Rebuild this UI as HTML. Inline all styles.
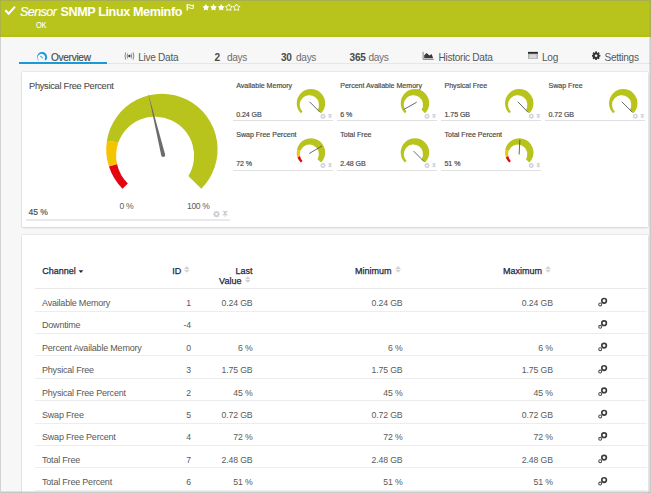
<!DOCTYPE html>
<html><head><meta charset="utf-8"><style>
*{margin:0;padding:0;box-sizing:border-box}
html,body{width:651px;height:493px;overflow:hidden;background:#f7f7f7;font-family:"Liberation Sans",sans-serif}
.a{position:absolute;white-space:nowrap}
#hdr{position:absolute;left:0;top:0;width:651px;height:37px;background:#b8c41c}
#tabline{position:absolute;left:19px;top:63px;width:632px;height:1px;background:#e6e6e6}
.tab{position:absolute;top:52.1px;font-size:10.1px;letter-spacing:-0.3px;color:#585858;white-space:nowrap;line-height:12px}
.tab b{color:#4a4a4a;font-weight:bold}
.dy{color:#6e6e6e}
#ul{position:absolute;left:19px;top:62px;width:88px;height:2px;background:#1a9ad8}
.panel{position:absolute;left:22px;width:626px;background:#fff;box-shadow:0 0 1.5px rgba(0,0,0,.18),0 1px 2px rgba(0,0,0,.1)}
.ct{position:absolute;font-size:7.05px;letter-spacing:0px;color:#4a4a4a;white-space:nowrap;line-height:9px;-webkit-text-stroke:0.18px #4a4a4a}
.cv{position:absolute;font-size:7.05px;letter-spacing:-0.05px;word-spacing:0px;color:#4a4a4a;white-space:nowrap;line-height:9px;-webkit-text-stroke:0.18px #4a4a4a}
.cl{position:absolute;width:100px;height:1px;background:#e0e0e0}
.th{position:absolute;font-size:9px;color:#1d2741;white-space:nowrap;line-height:10px;-webkit-text-stroke:0.25px #1d2741}
.tn{position:absolute;font-size:9px;letter-spacing:-0.2px;color:#585858;white-space:nowrap;line-height:11px}
.tr{position:absolute;font-size:8.7px;letter-spacing:-0.12px;color:#5a5a5a;white-space:nowrap;line-height:11px;text-align:right}
.rl{position:absolute;left:35px;width:612px;height:1px;background:#ededed}
#frame{position:absolute;left:0;top:0;width:651px;height:493px;border-left:1px solid rgba(150,150,150,.38);border-top:1px solid rgba(150,150,150,.45);border-right:1px solid rgba(150,150,150,.45);border-bottom:1px solid rgba(150,150,150,.5);pointer-events:none;box-shadow:inset -1px -1px 0 rgba(150,150,150,.25)}
</style></head><body>
<div id="hdr"></div><div class="a" style="left:0;top:35px;width:651px;height:1.6px;background:#b3c012"></div>
<div class="a" style="left:20px;top:5px;font-size:12.5px;font-style:italic;color:#fff;line-height:14px;letter-spacing:-0.55px;-webkit-text-stroke:0.2px #fff">Sensor</div>
<div class="a" style="left:60.4px;top:4.9px;font-size:12.6px;letter-spacing:-0.38px;font-weight:bold;color:#fff;line-height:14px">SNMP Linux Meminfo</div>
<div class="a" style="left:36.2px;top:21.2px;font-size:8.6px;letter-spacing:-0.1px;color:#fff;line-height:9px;-webkit-text-stroke:0.12px #fff;transform:scaleX(0.85);transform-origin:0 0">OK</div>

<div id="tabline"></div>
<div id="ul"></div>
<div class="tab" style="left:51px;color:#4a4a4a;font-size:10.1px;letter-spacing:-0.3px;-webkit-text-stroke:0.15px #4a4a4a">Overview</div>
<div class="tab" style="left:138.3px">Live Data</div>
<div class="tab" style="left:214.5px"><b>2</b></div><div class="tab dy" style="left:226.9px">days</div>
<div class="tab" style="left:281px"><b>30</b></div><div class="tab dy" style="left:296px">days</div>
<div class="tab" style="left:349.6px"><b>365</b></div><div class="tab dy" style="left:368.4px">days</div>
<div class="tab" style="left:438.6px">Historic Data</div>
<div class="tab" style="left:542px">Log</div>
<div class="tab" style="left:604.6px">Settings</div>

<div class="panel" style="top:72px;height:155px"></div>
<div class="a" style="left:29px;top:81px;font-size:9.2px;letter-spacing:-0.25px;color:#4d4d4d;line-height:11px;-webkit-text-stroke:0.1px #4d4d4d">Physical Free Percent</div>
<div class="a" style="left:28.4px;top:207.2px;font-size:8.6px;color:#4d4d4d;line-height:11px;-webkit-text-stroke:0.15px #4d4d4d">45 %</div>
<div class="a" style="left:119.6px;top:200.6px;font-size:8.6px;letter-spacing:-0.35px;color:#5c5c5c;line-height:11px">0 %</div>
<div class="a" style="left:187px;top:200.6px;font-size:8.6px;letter-spacing:-0.35px;color:#5c5c5c;line-height:11px">100 %</div>
<div class="a" style="left:25.5px;top:219px;width:204px;height:2px;background:#e9e9e9"></div>
<div class="ct" style="left:236.2px;top:80.6px">Available Memory</div><div class="cv" style="left:236.2px;top:109.6px">0.24 GB</div><div class="cl" style="left:233.0px;top:120.2px"></div><div class="ct" style="left:340.2px;top:80.6px">Percent Available Memory</div><div class="cv" style="left:340.2px;top:109.6px">6 %</div><div class="cl" style="left:337.0px;top:120.2px"></div><div class="ct" style="left:444.5px;top:80.6px">Physical Free</div><div class="cv" style="left:444.5px;top:109.6px">1.75 GB</div><div class="cl" style="left:441.3px;top:120.2px"></div><div class="ct" style="left:548.5px;top:80.6px">Swap Free</div><div class="cv" style="left:548.5px;top:109.6px">0.72 GB</div><div class="cl" style="left:545.3px;top:120.2px"></div><div class="ct" style="left:236.2px;top:129.9px">Swap Free Percent</div><div class="cv" style="left:236.2px;top:158.9px">72 %</div><div class="cl" style="left:233.0px;top:169.5px"></div><div class="ct" style="left:340.2px;top:129.9px">Total Free</div><div class="cv" style="left:340.2px;top:158.9px">2.48 GB</div><div class="cl" style="left:337.0px;top:169.5px"></div><div class="ct" style="left:444.5px;top:129.9px">Total Free Percent</div><div class="cv" style="left:444.5px;top:158.9px">51 %</div><div class="cl" style="left:441.3px;top:169.5px"></div>

<div class="panel" style="top:235px;height:260px"></div>
<div class="th" style="left:42.3px;top:266px">Channel</div>
<div class="th" style="left:172.3px;top:266px">ID</div>
<div class="th" style="right:398.6px;top:266px;text-align:right">Last</div>
<div class="th" style="right:409.6px;top:276.2px;text-align:right">Value</div>
<div class="th" style="left:354.9px;top:266px">Minimum</div>
<div class="th" style="left:502.9px;top:266px">Maximum</div>
<div class="rl" style="top:288px;height:1px;background:#e9e9e9"></div>
<div class="tn" style="left:42px;top:298.0px">Available Memory</div><div class="tr" style="right:460.1px;top:298.0px">1</div><div class="tr" style="right:398.5px;top:298.0px">0.24 GB</div><div class="tr" style="right:248.5px;top:298.0px">0.24 GB</div><div class="tr" style="right:98.2px;top:298.0px">0.24 GB</div><div class="rl" style="top:310.6px"></div><div class="tn" style="left:42px;top:320.4px">Downtime</div><div class="tr" style="right:460.1px;top:320.4px">-4</div><div class="rl" style="top:333.0px"></div><div class="tn" style="left:42px;top:342.8px">Percent Available Memory</div><div class="tr" style="right:460.1px;top:342.8px">0</div><div class="tr" style="right:398.5px;top:342.8px">6 %</div><div class="tr" style="right:248.5px;top:342.8px">6 %</div><div class="tr" style="right:98.2px;top:342.8px">6 %</div><div class="rl" style="top:355.4px"></div><div class="tn" style="left:42px;top:365.2px">Physical Free</div><div class="tr" style="right:460.1px;top:365.2px">3</div><div class="tr" style="right:398.5px;top:365.2px">1.75 GB</div><div class="tr" style="right:248.5px;top:365.2px">1.75 GB</div><div class="tr" style="right:98.2px;top:365.2px">1.75 GB</div><div class="rl" style="top:377.8px"></div><div class="tn" style="left:42px;top:387.6px">Physical Free Percent</div><div class="tr" style="right:460.1px;top:387.6px">2</div><div class="tr" style="right:398.5px;top:387.6px">45 %</div><div class="tr" style="right:248.5px;top:387.6px">45 %</div><div class="tr" style="right:98.2px;top:387.6px">45 %</div><div class="rl" style="top:400.2px"></div><div class="tn" style="left:42px;top:410.0px">Swap Free</div><div class="tr" style="right:460.1px;top:410.0px">5</div><div class="tr" style="right:398.5px;top:410.0px">0.72 GB</div><div class="tr" style="right:248.5px;top:410.0px">0.72 GB</div><div class="tr" style="right:98.2px;top:410.0px">0.72 GB</div><div class="rl" style="top:422.6px"></div><div class="tn" style="left:42px;top:432.4px">Swap Free Percent</div><div class="tr" style="right:460.1px;top:432.4px">4</div><div class="tr" style="right:398.5px;top:432.4px">72 %</div><div class="tr" style="right:248.5px;top:432.4px">72 %</div><div class="tr" style="right:98.2px;top:432.4px">72 %</div><div class="rl" style="top:445.0px"></div><div class="tn" style="left:42px;top:454.8px">Total Free</div><div class="tr" style="right:460.1px;top:454.8px">7</div><div class="tr" style="right:398.5px;top:454.8px">2.48 GB</div><div class="tr" style="right:248.5px;top:454.8px">2.48 GB</div><div class="tr" style="right:98.2px;top:454.8px">2.48 GB</div><div class="rl" style="top:467.4px"></div><div class="tn" style="left:42px;top:477.2px">Total Free Percent</div><div class="tr" style="right:460.1px;top:477.2px">6</div><div class="tr" style="right:398.5px;top:477.2px">51 %</div><div class="tr" style="right:248.5px;top:477.2px">51 %</div><div class="tr" style="right:98.2px;top:477.2px">51 %</div><div class="rl" style="top:489.8px"></div>

<svg class="a" style="left:0;top:0" width="651" height="493"><polygon points="205.90,4.10 204.75,6.02 202.57,6.52 204.05,8.20 203.84,10.43 205.90,9.55 207.96,10.43 207.75,8.20 209.23,6.52 207.05,6.02" fill="#fff"/><polygon points="213.55,4.10 212.40,6.02 210.22,6.52 211.70,8.20 211.49,10.43 213.55,9.55 215.61,10.43 215.40,8.20 216.88,6.52 214.70,6.02" fill="#fff"/><polygon points="221.20,4.10 220.05,6.02 217.87,6.52 219.35,8.20 219.14,10.43 221.20,9.55 223.26,10.43 223.05,8.20 224.53,6.52 222.35,6.02" fill="#fff"/><polygon points="228.85,4.10 227.70,6.02 225.52,6.52 227.00,8.20 226.79,10.43 228.85,9.55 230.91,10.43 230.70,8.20 232.18,6.52 230.00,6.02" fill="none" stroke="#fff" stroke-width="0.9" stroke-linejoin="round"/><polygon points="236.50,4.10 235.35,6.02 233.17,6.52 234.65,8.20 234.44,10.43 236.50,9.55 238.56,10.43 238.35,8.20 239.83,6.52 237.65,6.02" fill="none" stroke="#fff" stroke-width="0.9" stroke-linejoin="round"/><path d="M187.2 4.2V10.6" fill="none" stroke="#fff" stroke-width="1.3"/><path d="M187.4 5.1Q189.2 4.4 190.6 5.3Q192 6.1 193.3 5.2V8.1Q192 8.9 190.6 8.1Q189.2 7.4 187.4 8.1" fill="none" stroke="#fff" stroke-width="1.05"/><path d="M5.3 10.2L8.7 13.6L15.0 6.6" fill="none" stroke="#fff" stroke-width="2.1"/><path fill="#1a9ad8" d="M38.49 60.61 A5.10 5.10 0 1 1 45.71 60.61 L44.60 59.50 A3.70 3.70 0 1 0 38.80 60.30 Z"/><line x1="40.3" y1="56.0" x2="42.8" y2="58.1" stroke="#4aaee0" stroke-width="1.1"/><ellipse cx="129.4" cy="56" rx="1.1" ry="1.3" fill="#333"/><path d="M127.6 53.6Q126.6 56 127.6 58.4M131.2 53.6Q132.2 56 131.2 58.4" fill="none" stroke="#7a7a7a" stroke-width="0.9"/><path d="M125.7 52.4Q124.3 56 125.7 59.6M133.1 52.4Q134.5 56 133.1 59.6" fill="none" stroke="#7a7a7a" stroke-width="0.9"/><path d="M423.1 51.8V59.4H433.8" fill="none" stroke="#888" stroke-width="1"/><path d="M424.2 58.3V55.2L426.5 52.9L429.6 55.4L431.6 54L433.1 58.3Z" fill="#3a3a3a"/><rect x="528" y="51.9" width="9.9" height="7" fill="#b0b0b0"/><rect x="528" y="51.9" width="9.9" height="1.8" fill="#2a2a2a"/><rect x="529.4" y="54.3" width="7.1" height="3.8" fill="#d8d8d8"/><circle cx="596.1" cy="55.7" r="2.95" fill="#333"/><rect x="595.30" y="51.60" width="1.60" height="8.20" fill="#333" transform="rotate(0.0 596.1 55.7)"/><rect x="595.30" y="51.60" width="1.60" height="8.20" fill="#333" transform="rotate(45.0 596.1 55.7)"/><rect x="595.30" y="51.60" width="1.60" height="8.20" fill="#333" transform="rotate(90.0 596.1 55.7)"/><rect x="595.30" y="51.60" width="1.60" height="8.20" fill="#333" transform="rotate(135.0 596.1 55.7)"/><rect x="595.30" y="51.60" width="1.60" height="8.20" fill="#333" transform="rotate(180.0 596.1 55.7)"/><rect x="595.30" y="51.60" width="1.60" height="8.20" fill="#333" transform="rotate(225.0 596.1 55.7)"/><rect x="595.30" y="51.60" width="1.60" height="8.20" fill="#333" transform="rotate(270.0 596.1 55.7)"/><rect x="595.30" y="51.60" width="1.60" height="8.20" fill="#333" transform="rotate(315.0 596.1 55.7)"/><circle cx="596.1" cy="55.7" r="1.25" fill="#f7f7f7"/><path fill="#e3050f" d="M122.51 188.79 A55.70 55.70 0 0 1 108.93 166.61 L117.02 163.98 A39.00 39.00 0 0 0 127.84 183.46 Z"/><path fill="#f5c300" d="M108.93 166.61 A55.70 55.70 0 0 1 106.89 140.69 L118.36 142.50 A39.00 39.00 0 0 0 117.02 163.98 Z"/><path fill="#b8c41c" d="M106.89 140.69 A55.70 55.70 0 1 1 201.29 188.79 L188.40 175.90 A39.00 39.00 0 1 0 118.36 142.50 Z"/><path fill="#6c6c6c" d="M165.14 154.53 L148.00 92.60 L161.26 155.47 Z"/><circle cx="163.20" cy="155.00" r="2" fill="#6c6c6c"/><circle cx="216.5" cy="214.1" r="2.83" fill="#cdd0d6"/><rect x="216.00" y="210.95" width="1.00" height="6.30" fill="#cdd0d6" transform="rotate(0.0 216.5 214.1)"/><rect x="216.00" y="210.95" width="1.00" height="6.30" fill="#cdd0d6" transform="rotate(45.0 216.5 214.1)"/><rect x="216.00" y="210.95" width="1.00" height="6.30" fill="#cdd0d6" transform="rotate(90.0 216.5 214.1)"/><rect x="216.00" y="210.95" width="1.00" height="6.30" fill="#cdd0d6" transform="rotate(135.0 216.5 214.1)"/><rect x="216.00" y="210.95" width="1.00" height="6.30" fill="#cdd0d6" transform="rotate(180.0 216.5 214.1)"/><rect x="216.00" y="210.95" width="1.00" height="6.30" fill="#cdd0d6" transform="rotate(225.0 216.5 214.1)"/><rect x="216.00" y="210.95" width="1.00" height="6.30" fill="#cdd0d6" transform="rotate(270.0 216.5 214.1)"/><rect x="216.00" y="210.95" width="1.00" height="6.30" fill="#cdd0d6" transform="rotate(315.0 216.5 214.1)"/><circle cx="216.5" cy="214.1" r="1.10" fill="#fff"/><rect x="222.60" y="211.00" width="5.00" height="0.99" fill="#cdd0d6"/><rect x="223.85" y="211.00" width="2.50" height="3.41" fill="#cdd0d6"/><rect x="222.60" y="214.10" width="5.00" height="1.24" fill="#cdd0d6"/><rect x="224.70" y="214.72" width="0.80" height="2.48" fill="#cdd0d6"/><path fill="#b8c41c" d="M300.87 113.28 A14.25 14.25 0 1 1 321.03 113.28 L317.58 109.83 A9.60 9.60 0 1 0 302.56 111.59 Z"/><line x1="309.54" y1="101.79" x2="320.00" y2="112.25" stroke="#505050" stroke-width="0.85"/><circle cx="323.0" cy="116.3" r="2.25" fill="#cfd3da"/><rect x="322.60" y="113.85" width="0.80" height="4.90" fill="#cfd3da" transform="rotate(0.0 323.0 116.3)"/><rect x="322.60" y="113.85" width="0.80" height="4.90" fill="#cfd3da" transform="rotate(45.0 323.0 116.3)"/><rect x="322.60" y="113.85" width="0.80" height="4.90" fill="#cfd3da" transform="rotate(90.0 323.0 116.3)"/><rect x="322.60" y="113.85" width="0.80" height="4.90" fill="#cfd3da" transform="rotate(135.0 323.0 116.3)"/><rect x="322.60" y="113.85" width="0.80" height="4.90" fill="#cfd3da" transform="rotate(180.0 323.0 116.3)"/><rect x="322.60" y="113.85" width="0.80" height="4.90" fill="#cfd3da" transform="rotate(225.0 323.0 116.3)"/><rect x="322.60" y="113.85" width="0.80" height="4.90" fill="#cfd3da" transform="rotate(270.0 323.0 116.3)"/><rect x="322.60" y="113.85" width="0.80" height="4.90" fill="#cfd3da" transform="rotate(315.0 323.0 116.3)"/><circle cx="323.0" cy="116.3" r="0.95" fill="#fff"/><rect x="328.10" y="114.00" width="3.80" height="0.77" fill="#d0d3d9"/><rect x="329.05" y="114.00" width="1.90" height="2.64" fill="#d0d3d9"/><rect x="328.10" y="116.40" width="3.80" height="0.96" fill="#d0d3d9"/><rect x="329.70" y="116.88" width="0.61" height="1.92" fill="#d0d3d9"/><path fill="#b8c41c" d="M404.87 113.28 A14.25 14.25 0 1 1 425.03 113.28 L421.58 109.83 A9.60 9.60 0 1 0 406.56 111.59 Z"/><line x1="416.69" y1="102.22" x2="403.80" y2="109.48" stroke="#505050" stroke-width="0.85"/><circle cx="427.0" cy="116.3" r="2.25" fill="#cfd3da"/><rect x="426.60" y="113.85" width="0.80" height="4.90" fill="#cfd3da" transform="rotate(0.0 427.0 116.3)"/><rect x="426.60" y="113.85" width="0.80" height="4.90" fill="#cfd3da" transform="rotate(45.0 427.0 116.3)"/><rect x="426.60" y="113.85" width="0.80" height="4.90" fill="#cfd3da" transform="rotate(90.0 427.0 116.3)"/><rect x="426.60" y="113.85" width="0.80" height="4.90" fill="#cfd3da" transform="rotate(135.0 427.0 116.3)"/><rect x="426.60" y="113.85" width="0.80" height="4.90" fill="#cfd3da" transform="rotate(180.0 427.0 116.3)"/><rect x="426.60" y="113.85" width="0.80" height="4.90" fill="#cfd3da" transform="rotate(225.0 427.0 116.3)"/><rect x="426.60" y="113.85" width="0.80" height="4.90" fill="#cfd3da" transform="rotate(270.0 427.0 116.3)"/><rect x="426.60" y="113.85" width="0.80" height="4.90" fill="#cfd3da" transform="rotate(315.0 427.0 116.3)"/><circle cx="427.0" cy="116.3" r="0.95" fill="#fff"/><rect x="432.10" y="114.00" width="3.80" height="0.77" fill="#d0d3d9"/><rect x="433.05" y="114.00" width="1.90" height="2.64" fill="#d0d3d9"/><rect x="432.10" y="116.40" width="3.80" height="0.96" fill="#d0d3d9"/><rect x="433.70" y="116.88" width="0.61" height="1.92" fill="#d0d3d9"/><path fill="#b8c41c" d="M509.17 113.28 A14.25 14.25 0 1 1 529.33 113.28 L525.88 109.83 A9.60 9.60 0 1 0 510.86 111.59 Z"/><line x1="517.86" y1="101.76" x2="528.14" y2="112.41" stroke="#505050" stroke-width="0.85"/><circle cx="531.3000000000001" cy="116.3" r="2.25" fill="#cfd3da"/><rect x="530.90" y="113.85" width="0.80" height="4.90" fill="#cfd3da" transform="rotate(0.0 531.3000000000001 116.3)"/><rect x="530.90" y="113.85" width="0.80" height="4.90" fill="#cfd3da" transform="rotate(45.0 531.3000000000001 116.3)"/><rect x="530.90" y="113.85" width="0.80" height="4.90" fill="#cfd3da" transform="rotate(90.0 531.3000000000001 116.3)"/><rect x="530.90" y="113.85" width="0.80" height="4.90" fill="#cfd3da" transform="rotate(135.0 531.3000000000001 116.3)"/><rect x="530.90" y="113.85" width="0.80" height="4.90" fill="#cfd3da" transform="rotate(180.0 531.3000000000001 116.3)"/><rect x="530.90" y="113.85" width="0.80" height="4.90" fill="#cfd3da" transform="rotate(225.0 531.3000000000001 116.3)"/><rect x="530.90" y="113.85" width="0.80" height="4.90" fill="#cfd3da" transform="rotate(270.0 531.3000000000001 116.3)"/><rect x="530.90" y="113.85" width="0.80" height="4.90" fill="#cfd3da" transform="rotate(315.0 531.3000000000001 116.3)"/><circle cx="531.3000000000001" cy="116.3" r="0.95" fill="#fff"/><rect x="536.40" y="114.00" width="3.80" height="0.77" fill="#d0d3d9"/><rect x="537.35" y="114.00" width="1.90" height="2.64" fill="#d0d3d9"/><rect x="536.40" y="116.40" width="3.80" height="0.96" fill="#d0d3d9"/><rect x="538.00" y="116.88" width="0.61" height="1.92" fill="#d0d3d9"/><path fill="#b8c41c" d="M613.17 113.28 A14.25 14.25 0 1 1 633.33 113.28 L629.88 109.83 A9.60 9.60 0 1 0 614.86 111.59 Z"/><line x1="621.84" y1="101.79" x2="632.30" y2="112.25" stroke="#505050" stroke-width="0.85"/><circle cx="635.3000000000001" cy="116.3" r="2.25" fill="#cfd3da"/><rect x="634.90" y="113.85" width="0.80" height="4.90" fill="#cfd3da" transform="rotate(0.0 635.3000000000001 116.3)"/><rect x="634.90" y="113.85" width="0.80" height="4.90" fill="#cfd3da" transform="rotate(45.0 635.3000000000001 116.3)"/><rect x="634.90" y="113.85" width="0.80" height="4.90" fill="#cfd3da" transform="rotate(90.0 635.3000000000001 116.3)"/><rect x="634.90" y="113.85" width="0.80" height="4.90" fill="#cfd3da" transform="rotate(135.0 635.3000000000001 116.3)"/><rect x="634.90" y="113.85" width="0.80" height="4.90" fill="#cfd3da" transform="rotate(180.0 635.3000000000001 116.3)"/><rect x="634.90" y="113.85" width="0.80" height="4.90" fill="#cfd3da" transform="rotate(225.0 635.3000000000001 116.3)"/><rect x="634.90" y="113.85" width="0.80" height="4.90" fill="#cfd3da" transform="rotate(270.0 635.3000000000001 116.3)"/><rect x="634.90" y="113.85" width="0.80" height="4.90" fill="#cfd3da" transform="rotate(315.0 635.3000000000001 116.3)"/><circle cx="635.3000000000001" cy="116.3" r="0.95" fill="#fff"/><rect x="640.40" y="114.00" width="3.80" height="0.77" fill="#d0d3d9"/><rect x="641.35" y="114.00" width="1.90" height="2.64" fill="#d0d3d9"/><rect x="640.40" y="116.40" width="3.80" height="0.96" fill="#d0d3d9"/><rect x="642.00" y="116.88" width="0.61" height="1.92" fill="#d0d3d9"/><path fill="#e3050f" d="M300.87 162.58 A14.25 14.25 0 0 1 297.40 156.90 L299.98 156.07 A9.60 9.60 0 0 0 302.56 160.89 Z"/><path fill="#f5c300" d="M297.40 156.90 A14.25 14.25 0 0 1 296.88 150.27 L300.37 150.82 A9.60 9.60 0 0 0 299.98 156.07 Z"/><path fill="#b8c41c" d="M296.88 150.27 A14.25 14.25 0 1 1 321.03 162.58 L317.58 159.13 A9.60 9.60 0 1 0 300.37 150.82 Z"/><line x1="309.23" y1="153.52" x2="321.97" y2="145.98" stroke="#505050" stroke-width="0.85"/><circle cx="323.0" cy="165.6" r="2.25" fill="#cfd3da"/><rect x="322.60" y="163.15" width="0.80" height="4.90" fill="#cfd3da" transform="rotate(0.0 323.0 165.6)"/><rect x="322.60" y="163.15" width="0.80" height="4.90" fill="#cfd3da" transform="rotate(45.0 323.0 165.6)"/><rect x="322.60" y="163.15" width="0.80" height="4.90" fill="#cfd3da" transform="rotate(90.0 323.0 165.6)"/><rect x="322.60" y="163.15" width="0.80" height="4.90" fill="#cfd3da" transform="rotate(135.0 323.0 165.6)"/><rect x="322.60" y="163.15" width="0.80" height="4.90" fill="#cfd3da" transform="rotate(180.0 323.0 165.6)"/><rect x="322.60" y="163.15" width="0.80" height="4.90" fill="#cfd3da" transform="rotate(225.0 323.0 165.6)"/><rect x="322.60" y="163.15" width="0.80" height="4.90" fill="#cfd3da" transform="rotate(270.0 323.0 165.6)"/><rect x="322.60" y="163.15" width="0.80" height="4.90" fill="#cfd3da" transform="rotate(315.0 323.0 165.6)"/><circle cx="323.0" cy="165.6" r="0.95" fill="#fff"/><rect x="328.10" y="163.30" width="3.80" height="0.77" fill="#d0d3d9"/><rect x="329.05" y="163.30" width="1.90" height="2.64" fill="#d0d3d9"/><rect x="328.10" y="165.70" width="3.80" height="0.96" fill="#d0d3d9"/><rect x="329.70" y="166.18" width="0.61" height="1.92" fill="#d0d3d9"/><path fill="#b8c41c" d="M404.87 162.58 A14.25 14.25 0 1 1 425.03 162.58 L421.58 159.13 A9.60 9.60 0 1 0 406.56 160.89 Z"/><line x1="413.54" y1="151.09" x2="424.00" y2="161.55" stroke="#505050" stroke-width="0.85"/><circle cx="427.0" cy="165.6" r="2.25" fill="#cfd3da"/><rect x="426.60" y="163.15" width="0.80" height="4.90" fill="#cfd3da" transform="rotate(0.0 427.0 165.6)"/><rect x="426.60" y="163.15" width="0.80" height="4.90" fill="#cfd3da" transform="rotate(45.0 427.0 165.6)"/><rect x="426.60" y="163.15" width="0.80" height="4.90" fill="#cfd3da" transform="rotate(90.0 427.0 165.6)"/><rect x="426.60" y="163.15" width="0.80" height="4.90" fill="#cfd3da" transform="rotate(135.0 427.0 165.6)"/><rect x="426.60" y="163.15" width="0.80" height="4.90" fill="#cfd3da" transform="rotate(180.0 427.0 165.6)"/><rect x="426.60" y="163.15" width="0.80" height="4.90" fill="#cfd3da" transform="rotate(225.0 427.0 165.6)"/><rect x="426.60" y="163.15" width="0.80" height="4.90" fill="#cfd3da" transform="rotate(270.0 427.0 165.6)"/><rect x="426.60" y="163.15" width="0.80" height="4.90" fill="#cfd3da" transform="rotate(315.0 427.0 165.6)"/><circle cx="427.0" cy="165.6" r="0.95" fill="#fff"/><rect x="432.10" y="163.30" width="3.80" height="0.77" fill="#d0d3d9"/><rect x="433.05" y="163.30" width="1.90" height="2.64" fill="#d0d3d9"/><rect x="432.10" y="165.70" width="3.80" height="0.96" fill="#d0d3d9"/><rect x="433.70" y="166.18" width="0.61" height="1.92" fill="#d0d3d9"/><path fill="#e3050f" d="M509.17 162.58 A14.25 14.25 0 0 1 505.70 156.90 L508.28 156.07 A9.60 9.60 0 0 0 510.86 160.89 Z"/><path fill="#f5c300" d="M505.70 156.90 A14.25 14.25 0 0 1 505.18 150.27 L508.67 150.82 A9.60 9.60 0 0 0 508.28 156.07 Z"/><path fill="#b8c41c" d="M505.18 150.27 A14.25 14.25 0 1 1 529.33 162.58 L525.88 159.13 A9.60 9.60 0 1 0 508.67 150.82 Z"/><line x1="519.16" y1="154.50" x2="519.85" y2="139.71" stroke="#505050" stroke-width="0.85"/><circle cx="531.3000000000001" cy="165.6" r="2.25" fill="#cfd3da"/><rect x="530.90" y="163.15" width="0.80" height="4.90" fill="#cfd3da" transform="rotate(0.0 531.3000000000001 165.6)"/><rect x="530.90" y="163.15" width="0.80" height="4.90" fill="#cfd3da" transform="rotate(45.0 531.3000000000001 165.6)"/><rect x="530.90" y="163.15" width="0.80" height="4.90" fill="#cfd3da" transform="rotate(90.0 531.3000000000001 165.6)"/><rect x="530.90" y="163.15" width="0.80" height="4.90" fill="#cfd3da" transform="rotate(135.0 531.3000000000001 165.6)"/><rect x="530.90" y="163.15" width="0.80" height="4.90" fill="#cfd3da" transform="rotate(180.0 531.3000000000001 165.6)"/><rect x="530.90" y="163.15" width="0.80" height="4.90" fill="#cfd3da" transform="rotate(225.0 531.3000000000001 165.6)"/><rect x="530.90" y="163.15" width="0.80" height="4.90" fill="#cfd3da" transform="rotate(270.0 531.3000000000001 165.6)"/><rect x="530.90" y="163.15" width="0.80" height="4.90" fill="#cfd3da" transform="rotate(315.0 531.3000000000001 165.6)"/><circle cx="531.3000000000001" cy="165.6" r="0.95" fill="#fff"/><rect x="536.40" y="163.30" width="3.80" height="0.77" fill="#d0d3d9"/><rect x="537.35" y="163.30" width="1.90" height="2.64" fill="#d0d3d9"/><rect x="536.40" y="165.70" width="3.80" height="0.96" fill="#d0d3d9"/><rect x="538.00" y="166.18" width="0.61" height="1.92" fill="#d0d3d9"/><path d="M184.00 269.10L186.80 266.00L189.60 269.10Z M184.00 269.70L186.80 272.80L189.60 269.70Z" fill="#d2d2d2"/><path d="M245.00 279.30L247.80 276.20L250.60 279.30Z M245.00 279.90L247.80 283.00L250.60 279.90Z" fill="#d2d2d2"/><path d="M395.30 269.10L398.10 266.00L400.90 269.10Z M395.30 269.70L398.10 272.80L400.90 269.70Z" fill="#d2d2d2"/><path d="M545.30 269.10L548.10 266.00L550.90 269.10Z M545.30 269.70L548.10 272.80L550.90 269.70Z" fill="#d2d2d2"/><path d="M78.6 270.3H83.3L80.95 273Z" fill="#1d2741"/><circle cx="604.1" cy="300.80" r="2.3" fill="none" stroke="#3a3a3a" stroke-width="1.65"/><circle cx="600.2" cy="304.40" r="1.45" fill="none" stroke="#505050" stroke-width="1.1"/><circle cx="604.1" cy="323.20" r="2.3" fill="none" stroke="#3a3a3a" stroke-width="1.65"/><circle cx="600.2" cy="326.80" r="1.45" fill="none" stroke="#505050" stroke-width="1.1"/><circle cx="604.1" cy="345.60" r="2.3" fill="none" stroke="#3a3a3a" stroke-width="1.65"/><circle cx="600.2" cy="349.20" r="1.45" fill="none" stroke="#505050" stroke-width="1.1"/><circle cx="604.1" cy="368.00" r="2.3" fill="none" stroke="#3a3a3a" stroke-width="1.65"/><circle cx="600.2" cy="371.60" r="1.45" fill="none" stroke="#505050" stroke-width="1.1"/><circle cx="604.1" cy="390.40" r="2.3" fill="none" stroke="#3a3a3a" stroke-width="1.65"/><circle cx="600.2" cy="394.00" r="1.45" fill="none" stroke="#505050" stroke-width="1.1"/><circle cx="604.1" cy="412.80" r="2.3" fill="none" stroke="#3a3a3a" stroke-width="1.65"/><circle cx="600.2" cy="416.40" r="1.45" fill="none" stroke="#505050" stroke-width="1.1"/><circle cx="604.1" cy="435.20" r="2.3" fill="none" stroke="#3a3a3a" stroke-width="1.65"/><circle cx="600.2" cy="438.80" r="1.45" fill="none" stroke="#505050" stroke-width="1.1"/><circle cx="604.1" cy="457.60" r="2.3" fill="none" stroke="#3a3a3a" stroke-width="1.65"/><circle cx="600.2" cy="461.20" r="1.45" fill="none" stroke="#505050" stroke-width="1.1"/><circle cx="604.1" cy="480.00" r="2.3" fill="none" stroke="#3a3a3a" stroke-width="1.65"/><circle cx="600.2" cy="483.60" r="1.45" fill="none" stroke="#505050" stroke-width="1.1"/></svg>
<div id="frame"></div>
</body></html>
